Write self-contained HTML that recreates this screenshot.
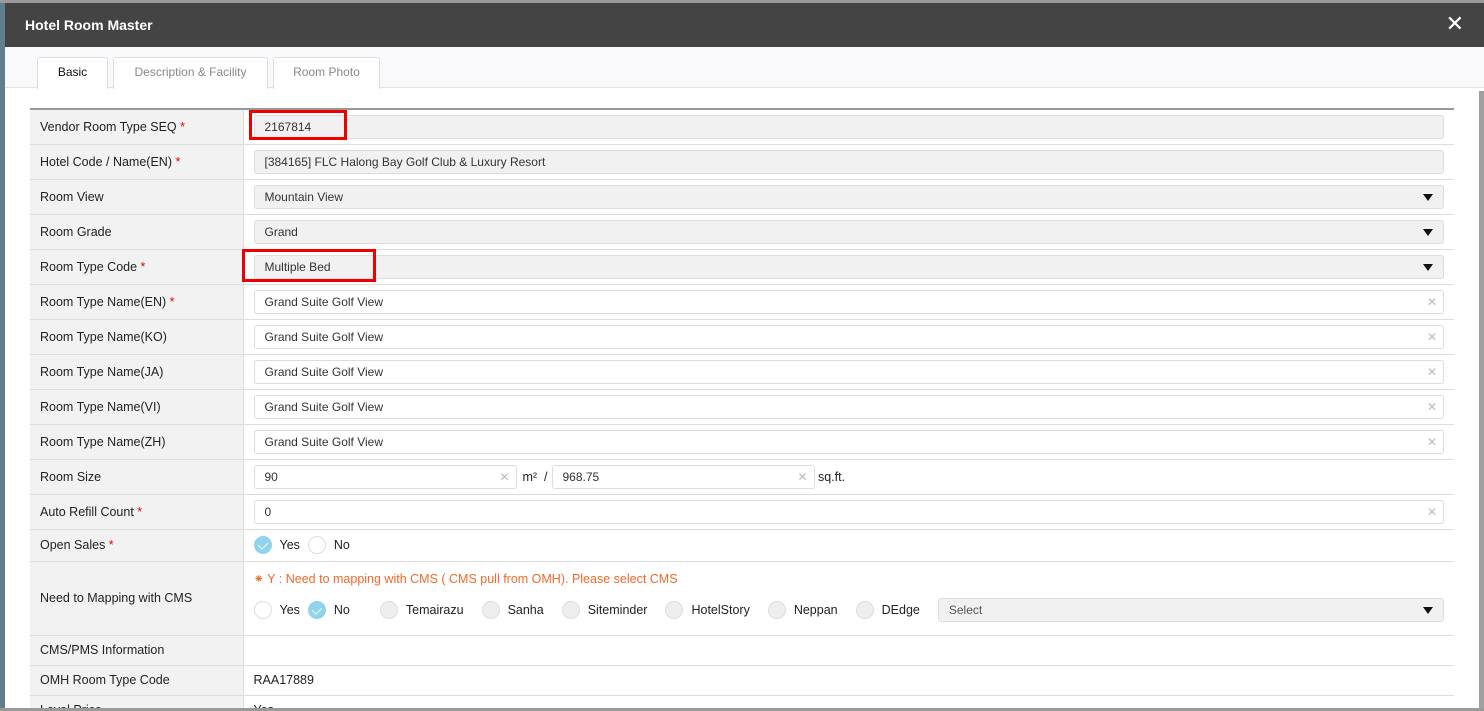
<!DOCTYPE html>
<html><head><style>
*{box-sizing:border-box;margin:0;padding:0}
html,body{width:1484px;height:711px;overflow:hidden}
body{background:#5f7f8f;font-family:"Liberation Sans",sans-serif;font-size:12.5px;color:#222;position:relative}
.top{position:absolute;left:0;top:0;width:1484px;height:3px;background:#9a9a9a}
.modal{position:absolute;left:5px;top:3px;width:1479px;height:705px;background:#fff;overflow:hidden}
.hdr{height:44px;background:#444;color:#fff;font-weight:bold;font-size:14px;padding:14px 20px}
.x{position:absolute;right:20px;top:8px;color:#fff;font-size:22px}
.tabs{height:41px;background:#f9f9fb;border-bottom:1px solid #e3e3e3;position:relative}
.tab{position:absolute;top:10px;height:32px;border:1px solid #ddd;border-bottom:none;background:#fff;color:#888;font-size:12px;text-align:center;padding-top:7px;border-radius:3px 3px 0 0}
.scroll{position:absolute;right:0;top:88px;width:5px;height:620px;background:#a0a0a0}
table{position:absolute;left:25px;top:105px;width:1424px;border-collapse:collapse;border-top:2px solid #999}
td{border-bottom:1px solid #ddd;vertical-align:middle}
tr{height:35px}
td.l{width:213px;background:#f2f2f2;padding-left:10px;border-right:1px solid #ddd}
td.v{padding:0 10px}
.r{color:#e00}
.in{height:24px;border:1px solid #ddd;border-radius:3px;background:#fff;padding:4px 10px;font-size:12px;position:relative;color:#333}
.ro{background:#f1f1f1}
.ar:after{content:"";position:absolute;right:10px;top:8px;border:5px solid transparent;border-top:7px solid #111;border-bottom:none}
.cl:after{content:"✕";position:absolute;right:6px;top:4px;color:#bbb;font-size:12px}
.rb{display:inline-block;width:18px;height:18px;border-radius:50%;border:1px solid #ddd;background:#fff;vertical-align:middle;margin-right:8px}
.ck{background:#8fd3ec;border-color:#8fd3ec;position:relative}
.ck:after{content:"";position:absolute;left:5px;top:3px;width:5px;height:8px;border:solid #fff;border-width:0 1.5px 1.5px 0;transform:rotate(45deg)}
.gr{background:#eee}
.opt{vertical-align:middle;margin-right:18px}
.red{position:absolute;border:3px solid #e00}
</style></head><body>
<div class="top"></div>
<div class="modal">
<div class="hdr">Hotel Room Master</div><div class="x">✕</div>
<div class="tabs">
<div class="tab" style="left:32px;width:71px;color:#111">Basic</div>
<div class="tab" style="left:108px;width:155px">Description &amp; Facility</div>
<div class="tab" style="left:268px;width:107px">Room Photo</div>
</div>
<div class="scroll"></div>
<table>
<tr><td class="l">Vendor Room Type SEQ <span class="r">*</span></td><td class="v"><div class="in ro">2167814</div></td></tr>
<tr><td class="l">Hotel Code / Name(EN) <span class="r">*</span></td><td class="v"><div class="in ro">[384165] FLC Halong Bay Golf Club &amp; Luxury Resort</div></td></tr>
<tr><td class="l">Room View</td><td class="v"><div class="in ro ar">Mountain View</div></td></tr>
<tr><td class="l">Room Grade</td><td class="v"><div class="in ro ar">Grand</div></td></tr>
<tr><td class="l">Room Type Code <span class="r">*</span></td><td class="v"><div class="in ro ar">Multiple Bed</div></td></tr>
<tr><td class="l">Room Type Name(EN) <span class="r">*</span></td><td class="v"><div class="in cl">Grand Suite Golf View</div></td></tr>
<tr><td class="l">Room Type Name(KO)</td><td class="v"><div class="in cl">Grand Suite Golf View</div></td></tr>
<tr><td class="l">Room Type Name(JA)</td><td class="v"><div class="in cl">Grand Suite Golf View</div></td></tr>
<tr><td class="l">Room Type Name(VI)</td><td class="v"><div class="in cl">Grand Suite Golf View</div></td></tr>
<tr><td class="l">Room Type Name(ZH)</td><td class="v"><div class="in cl">Grand Suite Golf View</div></td></tr>
<tr><td class="l">Room Size</td><td class="v"><div class="in cl" style="display:inline-block;width:263px">90</div><span style="margin:0 4px 0 6px">m² &nbsp;/</span><div class="in cl" style="display:inline-block;width:263px">968.75</div> sq.ft.</td></tr>
<tr><td class="l">Auto Refill Count <span class="r">*</span></td><td class="v"><div class="in cl">0</div></td></tr>
<tr style="height:32px"><td class="l">Open Sales <span class="r">*</span></td><td class="v"><span class="rb ck"></span><span class="opt" style="margin-right:8px">Yes</span><span class="rb"></span><span class="opt">No</span></td></tr>
<tr style="height:74px"><td class="l">Need to Mapping with CMS</td><td class="v"><div style="color:#f06a2a;margin:-4px 0 12px">⁕ Y : Need to mapping with CMS ( CMS pull from OMH). Please select CMS</div>
<div style="display:flex;align-items:center"><span class="rb"></span><span class="opt" style="margin-right:8px">Yes</span><span class="rb ck"></span><span class="opt" style="margin-right:30px">No</span><span class="rb gr"></span><span class="opt">Temairazu</span><span class="rb gr"></span><span class="opt">Sanha</span><span class="rb gr"></span><span class="opt">Siteminder</span><span class="rb gr"></span><span class="opt">HotelStory</span><span class="rb gr"></span><span class="opt">Neppan</span><span class="rb gr"></span><span class="opt">DEdge</span><div class="in ro ar" style="flex:1;color:#555">Select</div></div></td></tr>
<tr style="height:30px"><td class="l">CMS/PMS Information</td><td class="v"></td></tr>
<tr style="height:30px"><td class="l">OMH Room Type Code</td><td class="v">RAA17889</td></tr>
<tr style="height:30px"><td class="l">Level Price</td><td class="v">Yes</td></tr>
</table>
<div class="red" style="left:244px;top:107px;width:98px;height:30px"></div>
<div class="red" style="left:237px;top:246px;width:134px;height:33px"></div>
</div>
<div style="position:absolute;left:0;top:708px;width:1484px;height:3px;background:#9a9a9a"></div>
</body></html>
